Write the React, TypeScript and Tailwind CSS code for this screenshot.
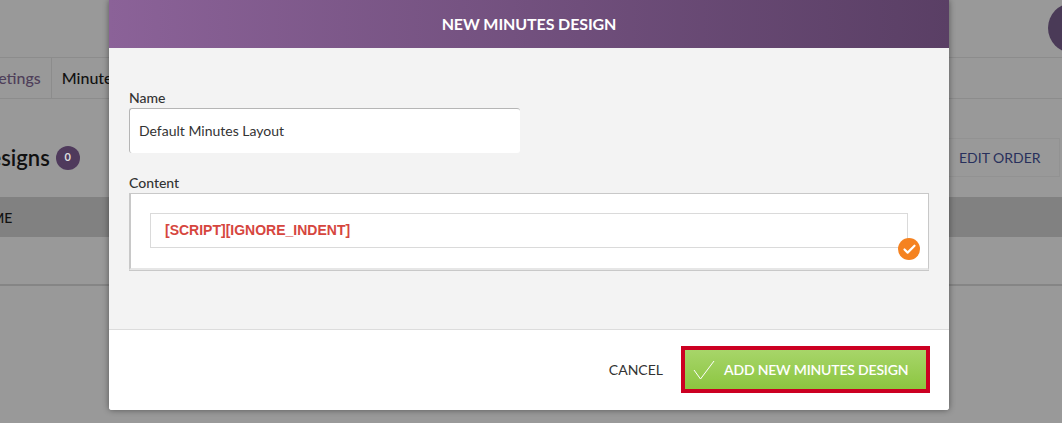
import { Check } from 'lucide-react';

// Dimmed page that sits behind the dialog
const BackgroundPage = () => (
  <div className="flex flex-col h-full bg-[#999999]">
    <div className="h-[57px] flex justify-end shrink-0">
      <div className="w-[50px] h-[50px] mt-[3px] -mr-[36px] rounded-full bg-[#4a3a57]" />
    </div>
    <div className="h-[42px] shrink-0 flex border-y border-[#8c8c8c]">
      <div className="flex items-center pr-[10px] -ml-[25px] border-r border-[#8c8c8c] text-[#4f3f5a] text-[16px] font-medium">
        Meetings
      </div>
      <div className="flex items-center pl-[10px] text-[#111] text-[16px] font-medium">Minutes</div>
    </div>
    <div className="h-[98px] shrink-0 flex items-center justify-between pt-[19px]">
      <div className="flex items-center gap-[6px] -ml-[27px]">
        <span className="text-[22px] font-semibold text-[#111]">Designs</span>
        <span className="w-[24px] h-[24px] rounded-full bg-[#4f3a5c] text-[#ddd] text-[11px] font-bold flex items-center justify-center">
          0
        </span>
      </div>
      <div className="w-[118px] h-[39px] mr-[2px] border border-[#929292] flex items-center pl-[16px] text-[14px] text-[#28305c]">
        EDIT ORDER
      </div>
    </div>
    <div className="h-[40px] shrink-0 bg-[#818181] flex items-center -ml-[29px] text-[14px] text-[#111] font-medium">
      NAME
    </div>
    <div className="h-[49px] shrink-0 border-b-2 border-[#858585]" />
  </div>
);

const NewDesignDialog = () => (
  <div className="absolute left-[109px] top-0 w-[840px] h-[410px] flex flex-col rounded-b-[3px] bg-white overflow-hidden shadow-[0_0_6px_rgba(0,0,0,0.45)]">
    <div className="h-[48px] shrink-0 flex items-center justify-center bg-gradient-to-r from-[#8b6298] to-[#5a3f65] text-white text-[16px] font-bold tracking-[-0.1px]">
      NEW MINUTES DESIGN
    </div>
    <div className="flex-1 bg-[#f3f3f3] px-[20px] pt-[41px]">
      <div className="text-[14px] leading-[18px] text-[#333] font-medium">Name</div>
      <div className="w-[391px] h-[45px] mt-px flex items-center pl-[9px] pb-[2px] bg-white rounded-[3px] border-t border-l border-[#b5b5b5] text-[14px] text-[#333]">
        Default Minutes Layout
      </div>
      <div className="text-[14px] leading-[18px] text-[#333] font-medium mt-[21px]">Content</div>
      <div className="relative w-[800px] h-[77px] mt-px bg-white border-2 border-[#c8c8c8] border-r border-t border-b-[#e6e6e6] shadow-[0_1px_0_#c8c8c8] pt-[19px] pl-[19px]">
        <div className="w-[758px] h-[35px] flex items-center pl-[14px] border border-[#dadada] text-[14px] font-bold text-[#d6463e] font-['Liberation_Sans',sans-serif]">
          [SCRIPT][IGNORE_INDENT]
        </div>
        <div className="absolute left-[767px] top-[44px] w-[22px] h-[22px] rounded-full bg-[#f58220] flex items-center justify-center">
          <Check className="w-[15px] h-[15px] text-white" strokeWidth={3.5} />
        </div>
      </div>
    </div>
    <div className="h-[81px] shrink-0 flex items-center justify-end gap-[18px] pr-[19px] pb-[1px] bg-white border-t border-[#dcdcdc]">
      <span className="text-[14px] text-[#333]">CANCEL</span>
      <div className="w-[249px] h-[47px] border-[4px] border-[#cc0022] bg-gradient-to-b from-[#a7d569] to-[#8cc63f] flex items-center pl-[8px] gap-[9px] text-white text-[14px] font-semibold tracking-[-0.18px]">
        <svg viewBox="0 0 22 20" className="w-[22px] h-[20px]" fill="none" stroke="white" strokeWidth="1">
          <path d="M1 10 L7.5 19 L21 1" />
        </svg>
        ADD NEW MINUTES DESIGN
      </div>
    </div>
  </div>
);

export default function App() {
  return (
    <div className="relative w-[1062px] h-[423px] overflow-hidden font-['Lato',sans-serif]">
      <BackgroundPage />
      <NewDesignDialog />
    </div>
  );
}
